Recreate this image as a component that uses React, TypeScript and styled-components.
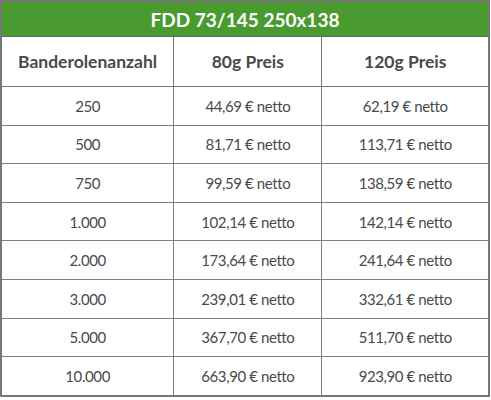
import React from 'react';
import styled, { createGlobalStyle } from 'styled-components';

const GlobalStyle = createGlobalStyle`
  body {
    margin: 0;
    background: #fff;
    font-family: Lato, "Liberation Sans", sans-serif;
  }
`;

const PriceTable = styled.table`
  width: 490px;
  border-collapse: collapse;
  border: 2px solid #777;
  color: #444;
`;

const TitleCell = styled.th`
  background: #4a9b2f;
  color: #fff;
  font-size: 19px;
  font-weight: 700;
  height: 34px;
  padding: 0;
  border-bottom: 1px solid #666;
  text-align: center;
`;

const HeadCell = styled.th`
  height: 49px;
  padding: 0;
  font-size: 17.5px;
  font-weight: 700;
  color: #4a4a4a;
  border: 1px solid #777;
  text-align: center;
`;

const Cell = styled.td`
  height: 37.6px;
  padding: 0;
  font-size: 15px;
  font-weight: 400;
  letter-spacing: -0.4px;
  color: #4a4a4a;
  border: 1px solid #808080;
  text-align: center;
`;

const rows = [
  ['250', '44,69', '62,19'],
  ['500', '81,71', '113,71'],
  ['750', '99,59', '138,59'],
  ['1.000', '102,14', '142,14'],
  ['2.000', '173,64', '241,64'],
  ['3.000', '239,01', '332,61'],
  ['5.000', '367,70', '511,70'],
  ['10.000', '663,90', '923,90'],
];

const App: React.FC = () => {
  return (
    <>
      <GlobalStyle />
      <PriceTable>
        <colgroup>
          <col style={{ width: 173 }} />
          <col style={{ width: 149 }} />
          <col style={{ width: 168 }} />
        </colgroup>
        <thead>
          <tr>
            <TitleCell colSpan={3}>FDD 73/145 250x138</TitleCell>
          </tr>
          <tr>
            <HeadCell>Banderolenanzahl</HeadCell>
            <HeadCell>80g Preis</HeadCell>
            <HeadCell>120g Preis</HeadCell>
          </tr>
        </thead>
        <tbody>
          {rows.map(([qty, p80, p120]) => (
            <tr key={qty}>
              <Cell>{qty}</Cell>
              <Cell>{p80} € netto</Cell>
              <Cell>{p120} € netto</Cell>
            </tr>
          ))}
        </tbody>
      </PriceTable>
    </>
  );
};

export default App;
